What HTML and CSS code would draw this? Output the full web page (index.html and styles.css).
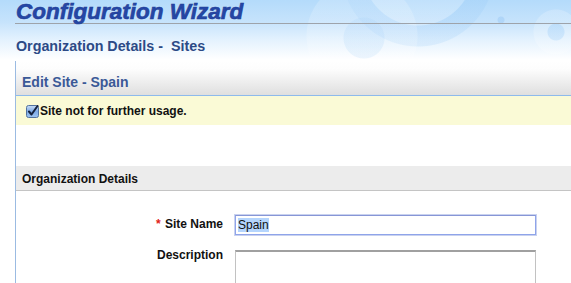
FILE: index.html
```html
<!DOCTYPE html>
<html lang="en">
<head>
    <meta charset="UTF-8">
    <meta name="viewport" content="width=device-width, initial-scale=1.0">
    <title>Configuration Wizard</title>
    <link rel="stylesheet" href="styles.css">
</head>
<body>
    <div class="masthead">
        <h1 class="title">Configuration Wizard</h1>
        <h2 class="subtitle">Organization Details -&nbsp; Sites</h2>
    </div>

    <div class="panel">
        <div class="panel-header">Edit Site - Spain</div>
        <div class="notice">
            <svg class="check" width="13" height="13" viewBox="0 0 13 13">
                <defs>
                    <linearGradient id="cb" x1="0" y1="0" x2="0" y2="1">
                        <stop offset="0" stop-color="#c9ddf6"/>
                        <stop offset="0.5" stop-color="#7eaae6"/>
                        <stop offset="1" stop-color="#9cc4f2"/>
                    </linearGradient>
                </defs>
                <rect x="0.5" y="0.5" width="12" height="12" rx="2" fill="url(#cb)" stroke="#52729f"/>
                <path d="M3 6.5 L5.5 9.5 L11.5 1" fill="none" stroke="#15223f" stroke-width="2" stroke-linecap="round" stroke-linejoin="round"/>
            </svg>
            <span>Site not for further usage.</span>
        </div>

        <div class="section-head">Organization Details</div>

        <div class="form">
            <div class="label"><span class="req">*</span> Site Name</div>
            <div class="text-field"><span class="selected">Spain</span></div>

            <div class="label label-top">Description</div>
            <div class="text-area"></div>
        </div>
    </div>
</body>
</html>
```

FILE: styles.css
```css
body {
    margin: 0;
    font-family: "Liberation Sans", Arial, sans-serif;
    background: #fff;
    overflow: hidden;
}
.masthead {
    height: 61px;
    background:
        radial-gradient(circle at 362px 36px, rgba(255,255,255,0.18) 0, rgba(255,255,255,0.18) 55px, transparent 56px),
        radial-gradient(circle at 364px 38px, rgba(140,195,245,0.18) 0, rgba(140,195,245,0.18) 20px, transparent 21px),
        radial-gradient(circle at 418px -30px, rgba(255,255,255,0.18) 0, rgba(255,255,255,0.18) 55px, rgba(140,195,245,0.18) 56px, rgba(140,195,245,0.18) 76px, transparent 77px),
        radial-gradient(circle at 556px 32px, rgba(140,195,245,0.2) 0, rgba(140,195,245,0.2) 8px, rgba(255,255,255,0.2) 9px, rgba(255,255,255,0.2) 22px, transparent 23px),
        radial-gradient(circle at 501px 20px, rgba(130,185,240,0.3) 0, rgba(130,185,240,0.3) 3px, transparent 4px),
        linear-gradient(#b4dbfb 0, #c6e3fc 22px, #e4f2fe 40px, #fff 60px);
}
.title {
    margin: 0 0 0 15px;
    height: 23px;
    border-bottom: 1px solid #9ea3aa;
    font-size: 22.5px;
    line-height: 23px;
    font-style: italic;
    font-weight: bold;
    color: #2547a6;
    -webkit-text-stroke: 0.6px #1f3d95;
    padding-left: 1px;
    white-space: nowrap;
}
.subtitle {
    margin: 14px 0 0 16px;
    font-size: 14.3px;
    line-height: 16px;
    font-weight: bold;
    color: #2c4a86;
}
.panel {
    margin-left: 15px;
    border-left: 1px solid #9bbbe2;
    height: 230px;
}
.panel-header {
    height: 35px;
    box-sizing: border-box;
    padding: 13px 0 0 6px;
    font-size: 14px;
    line-height: 16px;
    font-weight: bold;
    color: #3a5997;
    background: linear-gradient(#fff 0, #fdfdfd 8px, #e8e8e8 26px, #dedede 35px);
    border-bottom: 1px solid #8dbaec;
}
.notice {
    height: 29px;
    background: #fafad6;
    display: flex;
    align-items: center;
    padding-left: 10px;
    padding-top: 1px;
    box-sizing: border-box;
    font-size: 12px;
    font-weight: bold;
    color: #111;
}
.check {
    margin-right: 1px;
}
.section-head {
    margin-top: 41px;
    height: 25px;
    box-sizing: border-box;
    padding: 6px 0 0 6px;
    background: #ececec;
    border-bottom: 1px solid #c4c4c4;
    font-size: 12px;
    line-height: 14px;
    font-weight: bold;
    color: #111;
}
.form {
    display: grid;
    grid-template-columns: 207px 301px;
    column-gap: 12px;
    row-gap: 15px;
    padding-top: 24px;
}
.label {
    text-align: right;
    font-size: 12px;
    line-height: 14px;
    font-weight: bold;
    color: #111;
    padding-top: 2px;
}
.label-top {
    padding-top: 0;
    line-height: 10px;
}
.req {
    color: #e0201a;
    margin-right: 1px;
}
.text-field {
    height: 20px;
    box-sizing: border-box;
    border: 1px solid #8fa4ea;
    border-top-color: #8796d6;
    box-shadow: 0 0 0 1px #c9d2ef;
    padding: 3px 0 0 2px;
    font-size: 12px;
    line-height: 13px;
    color: #111;
}
.selected {
    background: #b5d5fd;
}
.text-area {
    height: 60px;
    border: 1px solid #c2c2c2;
    border-top: 2px solid #a0a0a0;
}
```
